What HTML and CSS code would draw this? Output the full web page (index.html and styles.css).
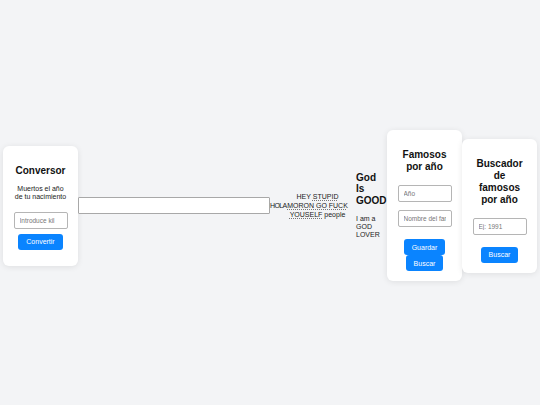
FILE: index.html
```html
<!DOCTYPE html>
<html>
<head>
    <title>Famosos</title>
    <meta charset="UTF-8">
    <meta name="viewport" content="width=device-width, initial-scale=1.0">
    <link rel="stylesheet" href="styles.css">
</head>
<body>
    <div class="page">
        <div class="card conversor">
            <h2>Conversor</h2>
            <p class="hint">Muertos el año de tu nacimiento</p>
            <input type="text" class="field" placeholder="Introduce kil">
            <button class="btn">Convertir</button>
        </div>

        <input type="text" class="wide-input">
        <span class="hola">HOLA</span>
        <div class="rant">HEY <span class="mark">STUPID</span> <span class="mark">MORON GO FUCK</span> <span class="mark">YOUSELF</span> people</div>

        <div class="god">
            <h3>God Is GOOD</h3>
            <p>I am a GOD LOVER</p>
        </div>

        <div class="card">
            <h2>Famosos por año</h2>
            <input type="text" class="field" placeholder="Año">
            <input type="text" class="field second" placeholder="Nombre del famoso">
            <button class="btn spaced">Guardar</button>
            <button class="btn">Buscar</button>
        </div>

        <div class="card">
            <h2>Buscador de famosos por año</h2>
            <input type="text" class="field" placeholder="Ej: 1991">
            <button class="btn spaced">Buscar</button>
        </div>
    </div>
</body>
</html>
```

FILE: styles.css
```css
body {
    margin: 0;
    background: #f3f4f6;
    font-family: "Liberation Sans", Arial, sans-serif;
    color: #222;
}

.page {
    display: flex;
    align-items: center;
    height: 405px;
    padding: 6px 3px 0;
    box-sizing: border-box;
}

.card {
    flex: none;
    display: flex;
    flex-direction: column;
    align-items: center;
    width: 75px;
    box-sizing: border-box;
    padding: 10px;
    background: white;
    border-radius: 6px;
    box-shadow: 0 1px 6px rgba(0,0,0,0.09);
    text-align: center;
}

.card h2 {
    margin: 9px 0 12px;
    font-size: 10px;
    line-height: 12px;
    color: #111;
}

.conversor {
    padding-bottom: 16px;
}

.conversor h2 {
    margin-bottom: 8px;
}

.hint {
    margin: 0 0 11px;
    padding: 0 1px;
    font-size: 7px;
    line-height: 8px;
}

.field {
    width: 54px;
    height: 17px;
    box-sizing: border-box;
    margin: 0;
    padding: 0 5px;
    border: 1px solid #b5b5b5;
    border-radius: 2px;
    font-family: inherit;
    font-size: 6.5px;
    background: white;
}

.field::placeholder {
    color: #777;
}

.field.second {
    margin-top: 8px;
}

.btn {
    height: 16px;
    margin: 5px 0 0;
    padding: 0 8px;
    border: none;
    border-radius: 3px;
    background: #0a84ff;
    color: white;
    font-family: inherit;
    font-size: 7px;
}

.btn.spaced {
    margin-top: 12px;
}

.btn.spaced + .btn {
    margin-top: 0;
}

.wide-input {
    flex: none;
    width: 192px;
    height: 17px;
    box-sizing: border-box;
    margin: 0;
    border: 1px solid #a8a8a8;
    border-radius: 1px;
    background: white;
}

.hola {
    flex: none;
    width: 16px;
    margin-right: 1px;
    font-size: 7px;
    letter-spacing: -0.6px;
    line-height: 9px;
}

.rant {
    flex: none;
    width: 61px;
    font-size: 7px;
    line-height: 9px;
    text-align: center;
}

.mark {
    text-decoration: underline dotted #777;
}

.god {
    flex: none;
    width: 31px;
    margin-left: 8px;
}

.god h3 {
    margin: 0 0 9px;
    font-size: 10px;
    line-height: 11.5px;
    color: #111;
}

.god p {
    margin: 0;
    font-size: 7px;
    line-height: 8px;
}
```
